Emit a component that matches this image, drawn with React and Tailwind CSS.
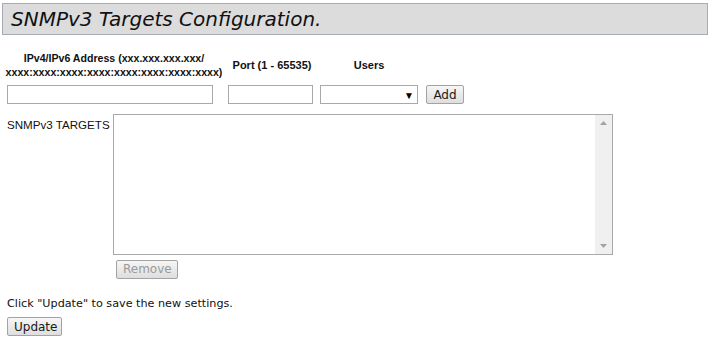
import React from "react";

const verdana = { fontFamily: '"DejaVu Sans", Verdana, sans-serif' };
const arial = { fontFamily: '"Liberation Sans", Arial, sans-serif' };

function Btn({ children, disabled, className = "" }) {
  return (
    <button
      disabled={disabled}
      className={`h-[19px] px-[6px] border border-[#a3a3a3] rounded-[2px] bg-gradient-to-b from-[#f6f6f6] to-[#dedede] text-[12px] leading-none ${
        disabled ? "text-[#9a9a9a]" : "text-[#1a1a1a]"
      } ${className}`}
      style={verdana}
    >
      {children}
    </button>
  );
}

export default function App() {
  return (
    <div className="w-[713px] h-[340px] bg-white text-black overflow-hidden">
      {/* Page title */}
      <div className="mx-[2px] mt-[3px] h-[32px] w-[706px] border border-[#a7abb8] bg-[#dcdcdc] flex items-center pl-[8px]">
        <span className="italic text-[20px] text-[#111]" style={verdana}>
          SNMPv3 Targets Configuration.
        </span>
      </div>

      {/* Column headers */}
      <div
        className="flex items-center mt-[15px] h-[30px] text-[11px] font-bold leading-[14px] text-[#111]"
        style={arial}
      >
        <div className="ml-[4px] w-[220px] text-center text-[10.6px]">
          IPv4/IPv6 Address (xxx.xxx.xxx.xxx/
          <br />
          xxxx:xxxx:xxxx:xxxx:xxxx:xxxx:xxxx:xxxx)
        </div>
        <div className="w-[96px] text-center">Port (1 - 65535)</div>
        <div className="w-[98px] text-center">Users</div>
      </div>

      {/* Inputs */}
      <div className="flex items-center mt-[5px]">
        <input
          type="text"
          className="ml-[7px] w-[206px] h-[19px] border border-[#a9a9a9] outline-none"
        />
        <input
          type="text"
          className="ml-[15px] w-[85px] h-[19px] border border-[#a9a9a9] outline-none"
        />
        <div className="ml-[7px] w-[98px] h-[19px] border border-[#a9a9a9] flex items-center justify-end pr-[3px]">
          <span className="text-[10px] leading-none text-black">▼</span>
        </div>
        <Btn className="ml-[8px] w-[38px]">Add</Btn>
      </div>

      {/* Targets list */}
      <div className="flex mt-[10px]">
        <div className="ml-[7px] w-[106px] pt-[2px] text-[11.6px] text-[#111]" style={arial}>
          SNMPv3 TARGETS
        </div>
        <div className="w-[500px]">
          <div className="h-[141px] border border-[#a9a9a9] flex justify-end">
            <div className="w-[17px] h-full bg-[#f0f0f0] flex flex-col items-center justify-between py-[6px]">
              <svg width="7" height="4" viewBox="0 0 7 4">
                <path d="M3.5 0 L7 4 L0 4 Z" fill="#a3a3a3" />
              </svg>
              <svg width="7" height="4" viewBox="0 0 7 4">
                <path d="M0 0 L7 0 L3.5 4 Z" fill="#a3a3a3" />
              </svg>
            </div>
          </div>
          <Btn disabled className="mt-[4px] ml-[3px] w-[62px]">
            Remove
          </Btn>
        </div>
      </div>

      {/* Footer */}
      <div className="ml-[7px] mt-[17px] text-[11.2px] text-[#111]" style={verdana}>
        Click "Update" to save the new settings.
      </div>
      <Btn className="ml-[7px] mt-[4px] w-[55px]">Update</Btn>
    </div>
  );
}
